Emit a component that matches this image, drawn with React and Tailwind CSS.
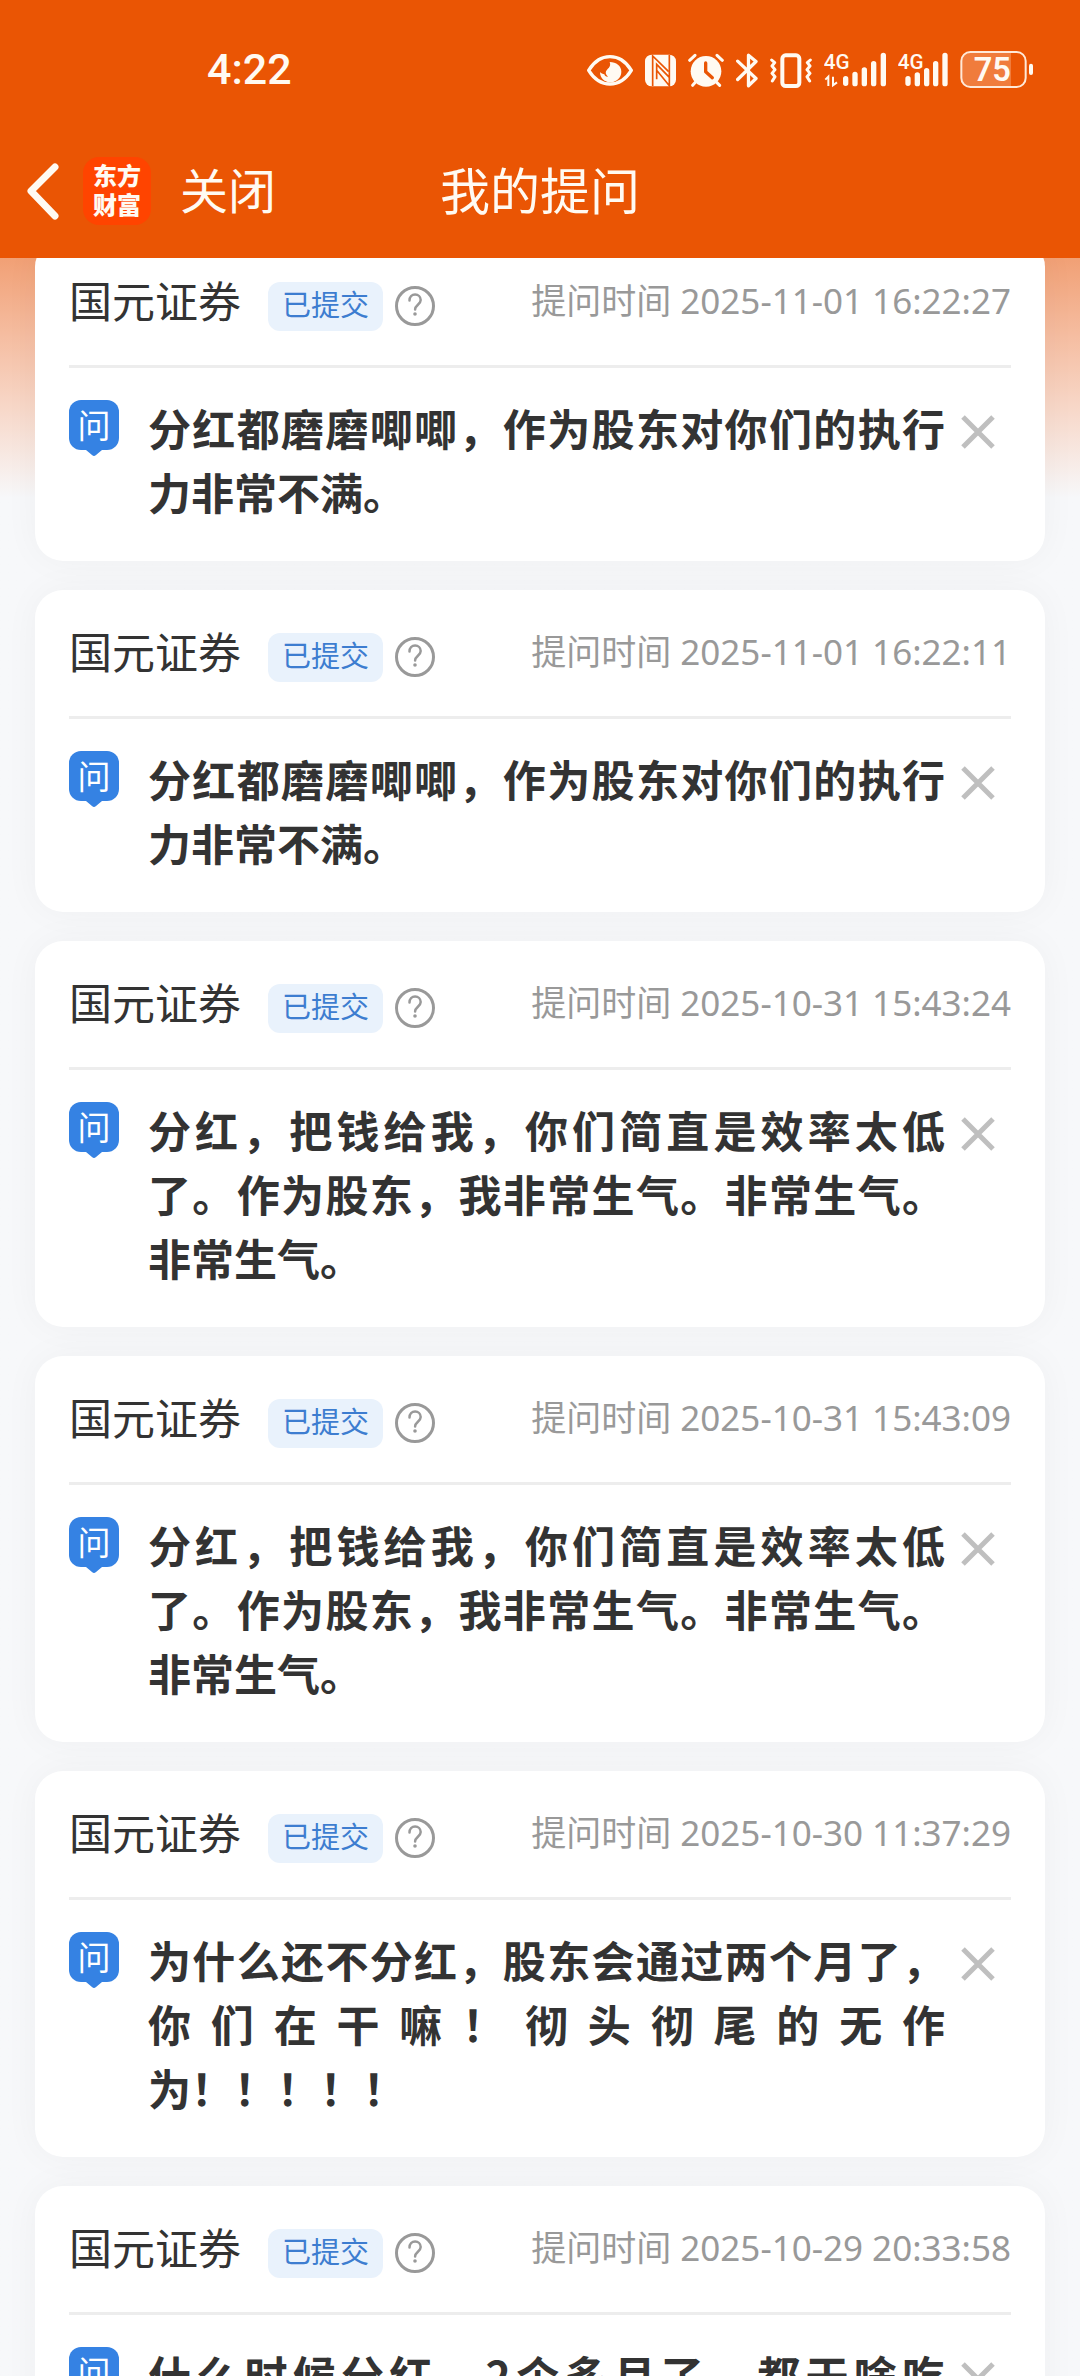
const questions = [
  { time: "2025-11-01 16:22:27", text: "分红都磨磨唧唧，作为股东对你们的执行力非常不满。" },
  { time: "2025-11-01 16:22:11", text: "分红都磨磨唧唧，作为股东对你们的执行力非常不满。" },
  { time: "2025-10-31 15:43:24", text: "分红，把钱给我，你们简直是效率太低了。作为股东，我非常生气。非常生气。非常生气。" },
  { time: "2025-10-31 15:43:09", text: "分红，把钱给我，你们简直是效率太低了。作为股东，我非常生气。非常生气。非常生气。" },
  { time: "2025-10-30 11:37:29", text: "为什么还不分红，股东会通过两个月了，你们在干嘛！彻头彻尾的无作为！！！！！" },
  { time: "2025-10-29 20:33:58", text: "什么时候分红，2个多月了，都干啥吃", partial: true },
];

function EyeIcon() {
  return (
    <svg className="h-[37px] w-[46px]" viewBox="80 60 138 111" fill="none" aria-hidden="true">
      <path d="M85 118C101 92 123 77 149 77s48 15 64 41c-16 26-38 41-64 41s-48-15-64-41Z" stroke="#fffaf2" strokeWidth="10" strokeLinejoin="round" />
      <path d="M148 93c20 0 35 12 35 29 0 18-15 32-33 32-17 0-31-13-31-31 4 4 8 6 13 7 1 5 6 8 11 7-6-5-8-10-6-16 3-8 17-12 11-28Z" fill="#fffaf2" />
    </svg>
  );
}

function NfcIcon() {
  return (
    <svg className="h-[37px] w-[31px]" viewBox="254 60 93 111" aria-hidden="true">
      <rect x="254" y="71" width="93" height="95" rx="20" fill="#fffaf2" />
      <path d="M277 165V75L325 122" stroke="#ea5504" strokeWidth="5" fill="none" />
      <path d="M289 145V100l38 39M289 118l38 46V72" stroke="#ea5504" strokeWidth="5" fill="none" />
    </svg>
  );
}

function AlarmIcon() {
  return (
    <svg className="h-[37px] w-[36px]" viewBox="384 60 108 111" fill="none" strokeLinecap="round" aria-hidden="true">
      <circle cx="438" cy="121" r="46" fill="#fffaf2" />
      <path d="M389 88l16-15M487 88l-16-15M406 154l-8 9M470 154l9 9" stroke="#fffaf2" strokeWidth="9" />
      <path d="M437 96v26l20 18" stroke="#ea5504" strokeWidth="10" strokeLinejoin="round" />
    </svg>
  );
}

function BluetoothIcon() {
  return (
    <svg className="h-[37px] w-[22px]" viewBox="527 60 67 111" fill="none" aria-hidden="true">
      <path d="M532 90l56 53-23 22V72l23 19-56 55" stroke="#fffaf2" strokeWidth="10" strokeLinecap="round" strokeLinejoin="round" />
    </svg>
  );
}

function VibrateIcon() {
  return (
    <svg className="h-[37px] w-[42px]" viewBox="630 60 126 111" fill="none" stroke="#fffaf2" strokeLinejoin="round" strokeLinecap="round" aria-hidden="true">
      <rect x="667" y="73" width="51" height="92" rx="10" strokeWidth="12" />
      <path d="M635 87l9 8-8 10 9 11-9 11 9 10-8 13M751 87l-9 8 8 10-9 11 9 11-9 10 8 13" strokeWidth="9" />
    </svg>
  );
}

function SignalDataIcon() {
  return (
    <svg className="h-[37px] w-[62px]" viewBox="792 60 186 111" fill="none" aria-hidden="true">
      <text x="791" y="114" fontSize="62" fontWeight="500" fontFamily="Roboto, sans-serif" fill="#fffaf2">4G</text>
      <path d="M796 146l9-9v28M819 137v26l12-9" stroke="#fffaf2" strokeWidth="6" />
      <path d="M857 143v14M885 130v28M913 117v41M941 98v60M970 73v85" stroke="#fffaf2" strokeWidth="16" strokeLinecap="round" />
    </svg>
  );
}

function SignalIcon() {
  return (
    <svg className="h-[37px] w-[50px]" viewBox="1014 60 150 111" fill="none" aria-hidden="true">
      <text x="1013" y="114" fontSize="62" fontWeight="500" fontFamily="Roboto, sans-serif" fill="#fffaf2">4G</text>
      <path d="M1044 143v14M1072 132v26M1100 119v39M1127 98v60M1155 73v85" stroke="#fffaf2" strokeWidth="16" strokeLinecap="round" />
    </svg>
  );
}

function BatteryIcon() {
  return (
    <svg className="h-[37px] w-[74px]" viewBox="1199 60 222 111" fill="none" aria-hidden="true">
      <path d="M1228 65h124v101h-124a24 24 0 0 1-24-24V89a24 24 0 0 1 24-24Z" fill="#f07c3c" />
      <rect x="1203" y="63" width="193" height="105" rx="27" stroke="#ffe9d8" strokeWidth="6" />
      <path d="M1412 104v22" stroke="#fffaf2" strokeWidth="12" strokeLinecap="round" />
      <text x="1296" y="150" textAnchor="middle" fontSize="98" fontWeight="600" fontFamily="Roboto, sans-serif" fill="#fffaf2">75</text>
    </svg>
  );
}

function StatusBar() {
  return (
    <div className="flex h-[138px] items-center justify-between pr-[46px] pl-[207px]">
      <time className="font-[Roboto,sans-serif] text-[43px] leading-none font-medium">4:22</time>
      <div className="flex items-center gap-3">
        <EyeIcon />
        <NfcIcon />
        <AlarmIcon />
        <BluetoothIcon />
        <VibrateIcon />
        <SignalDataIcon />
        <SignalIcon />
        <BatteryIcon />
      </div>
    </div>
  );
}

function TitleBar() {
  return (
    <div className="grid h-[106px] grid-cols-[1fr_auto_1fr] items-center">
      <nav className="flex items-center pl-6">
        <button type="button" aria-label="返回" className="w-[36px]">
          <svg className="h-[60px] w-[36px]" viewBox="0 0 36 60" fill="none" aria-hidden="true">
            <path d="M31 6L7 30l24 25" stroke="#fffaf2" strokeWidth="7" strokeLinecap="round" strokeLinejoin="round" />
          </svg>
        </button>
        <a href="#home" className="ml-[23px] flex h-[68px] w-[68px] items-center justify-center rounded-2xl bg-[#ff4400] pb-1 text-center text-[24px] leading-[29px] font-black">
          <span>
            东方
            <br />
            财富
          </span>
        </a>
        <button type="button" className="ml-[29px] pb-1.5 text-[48px] leading-[64px]">关闭</button>
      </nav>
      <h1 className="pb-1.5 text-[50px] leading-[64px]">我的提问</h1>
    </div>
  );
}

function AskMark() {
  return (
    <span className="mt-[5px] flex w-[50px] shrink-0 flex-col items-center">
      <span className="flex h-[50px] w-full items-center justify-center rounded-xl bg-[#3582e3] pb-0.5 text-[33px] leading-none text-white">问</span>
      <svg className="h-[6px] w-[16px]" viewBox="0 0 16 6" aria-hidden="true">
        <path d="M0 0h16L10 5q-2 2-4 0Z" fill="#3582e3" />
      </svg>
    </span>
  );
}

function QuestionCard({ time, text, partial }) {
  return (
    <article className="rounded-[28px] bg-white px-[34px] pb-[38px] shadow-[0_0_36px_rgba(0,0,0,0.04)]">
      <header className="flex h-[129px] items-center border-b-[3px] border-[#ededed] pb-1.5">
        <h2 className="text-[43px] leading-[64px] text-[#333]">国元证券</h2>
        <span className="mt-3.5 ml-[27px] flex h-[49px] items-start rounded-[12px] bg-[#e9f2fc] px-[14px] text-[29px] leading-[42px] text-[#3d7dd0]">已提交</span>
        <button type="button" aria-label="状态说明" className="mt-3.5 ml-3">
          <svg className="h-[40px] w-[40px]" viewBox="0 0 40 40" fill="none" stroke="#999" aria-hidden="true">
            <circle cx="20" cy="20" r="18.5" strokeWidth="3" />
            <path d="M14.5 14.5c0-3.500 2.500-6 5.600-6s5.600 2.300 5.600 5.500c0 4.500-5.600 5-5.600 9.500" strokeWidth="2.500" strokeLinecap="round" />
            <circle cx="20" cy="28" r="1.800" fill="#999" stroke="none" />
          </svg>
        </button>
        <p className="mt-1 ml-auto font-['Noto_Sans','Noto_Sans_CJK_SC',sans-serif] text-[35px] leading-[64px] text-[#999]">
          提问时间 <time>{time}</time>
        </p>
      </header>
      <div className="flex items-start pt-[27px]">
        <AskMark />
        <p className={"ml-[29px] flex-1 text-justify text-[43px] leading-[64px] font-bold text-[#333] " + (partial ? "[text-align-last:justify]" : "")}>
          {text}
        </p>
        <button type="button" aria-label="删除" className="mt-[5px] flex h-[64px] w-[66px] items-center justify-center">
          <svg className="h-[36px] w-[36px]" viewBox="0 0 36 36" fill="none" aria-hidden="true">
            <path d="M3 3l30 30M33 3L3 33" stroke="#bfbfbf" strokeWidth="5" />
          </svg>
        </button>
      </div>
    </article>
  );
}

export default function App() {
  return (
    <div lang="zh-CN" className="flex h-screen flex-col overflow-hidden bg-[#f7f8fa] font-['Noto_Sans_CJK_SC',sans-serif]">
      <header className="z-10 shrink-0 bg-[#ea5504] pb-[14px] text-[#fffaf2]">
        <StatusBar />
        <TitleBar />
      </header>
      <main className="min-h-0 flex-1 bg-linear-to-b from-[#f1a075] to-[#f7f8fa] to-[240px]">
        <div className="-mt-[19px] flex flex-col gap-[29px] px-[35px]">
          {questions.map((q) => (
            <QuestionCard key={q.time} {...q} />
          ))}
        </div>
      </main>
    </div>
  );
}
